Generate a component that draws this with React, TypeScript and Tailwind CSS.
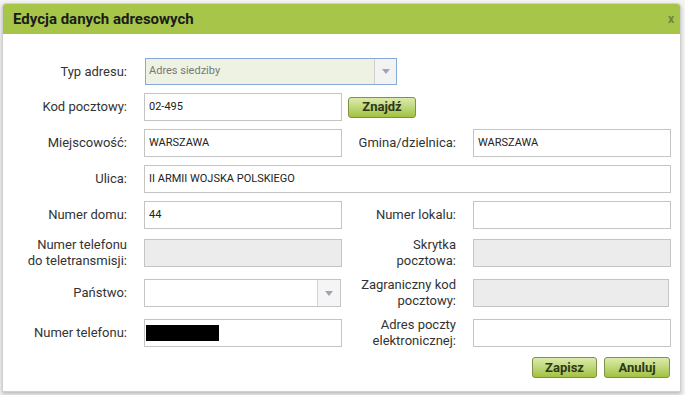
import React from 'react';

const FONT = { fontFamily: 'Roboto, "Liberation Sans", sans-serif' };

function Label({ children }: { children: React.ReactNode }) {
  return (
    <div className="pr-[17px] text-right text-[13px] leading-[16px] text-[#333]">{children}</div>
  );
}

function Input({
  value,
  disabled,
  className = '',
  children,
}: {
  value?: string;
  disabled?: boolean;
  className?: string;
  children?: React.ReactNode;
}) {
  return (
    <div
      className={`flex h-[28px] items-center border border-[#c4c4c4] px-[4px] text-[11px] text-[#222] ${
        disabled ? 'bg-[#ececec]' : 'bg-white'
      } ${className}`}
    >
      {value}
      {children}
    </div>
  );
}

function Arrow() {
  return (
    <svg width="8" height="5" viewBox="0 0 8 5">
      <path d="M0 0h8L4 5z" fill="#9aa6b4" />
    </svg>
  );
}

function GreenButton({ children, className = '' }: { children: React.ReactNode; className?: string }) {
  return (
    <button
      className={`flex h-[21px] items-center justify-center rounded-[3px] border border-[#7f9146] bg-linear-to-b from-[#dcebab] to-[#a2c23d] text-[13px] font-bold text-[#2e3819] ${className}`}
    >
      {children}
    </button>
  );
}

export default function App() {
  return (
    <div className="h-[395px] w-[685px] overflow-hidden bg-[#f4f4f4]" style={FONT}>
      <div className="ml-[2px] mt-[3px] w-[679px] overflow-hidden rounded-t-[4px] border border-[#cfcfcf] bg-white shadow-[0_2px_4px_rgba(0,0,0,0.25)]">
        <div className="flex h-[30px] items-center justify-between bg-[#a7c649] pl-[10px] pr-[6px]">
          <span className="text-[15px] font-bold text-[#1b1b1b]">Edycja danych adresowych</span>
          <span className="text-[12px] font-bold text-[#6e8443]">x</span>
        </div>

        <div className="grid grid-cols-[141px_198px_131px_198px] items-center gap-y-[8px] pb-[13px] pt-[24px]">
          <Label>Typ adresu:</Label>
          <div className="col-span-3">
            <div className="ml-[1px] flex h-[27px] w-[252px] border border-[#85aad8] bg-[#eef2e3]">
              <div className="flex flex-1 items-center px-[3px] text-[11px] text-[#777]">Adres siedziby</div>
              <div className="flex w-[22px] items-center justify-center border-l border-[#d0d0d0] bg-[#f3f3f3]">
                <Arrow />
              </div>
            </div>
          </div>

          <Label>Kod pocztowy:</Label>
          <Input value="02-495" />
          <div className="col-span-2">
            <GreenButton className="ml-[6px] w-[68px]">Znajdź</GreenButton>
          </div>

          <Label>Miejscowość:</Label>
          <Input value="WARSZAWA" />
          <Label>Gmina/dzielnica:</Label>
          <Input value="WARSZAWA" />

          <Label>Ulica:</Label>
          <Input value="II ARMII WOJSKA POLSKIEGO" className="col-span-3" />

          <Label>Numer domu:</Label>
          <Input value="44" />
          <Label>Numer lokalu:</Label>
          <Input />

          <Label>
            Numer telefonu
            <br />
            do teletransmisji:
          </Label>
          <Input disabled />
          <Label>
            Skrytka
            <br />
            pocztowa:
          </Label>
          <Input disabled />

          <Label>Państwo:</Label>
          <div className="flex h-[28px] w-[197px] border border-[#c4c4c4] bg-white">
            <div className="flex-1" />
            <div className="flex w-[23px] items-center justify-center border-l border-[#d6d6d6] bg-[#f5f5f5]">
              <Arrow />
            </div>
          </div>
          <Label>
            Zagraniczny kod
            <br />
            pocztowy:
          </Label>
          <Input disabled className="w-[196px]" />

          <Label>Numer telefonu:</Label>
          <Input className="!px-[1px]">
            <div className="h-[16px] w-[73px] bg-black" />
          </Input>
          <Label>
            Adres poczty
            <br />
            elektronicznej:
          </Label>
          <Input />

          <div className="col-span-4 flex justify-end gap-[7px] pr-[1px]">
            <GreenButton className="w-[65px]">Zapisz</GreenButton>
            <GreenButton className="w-[66px]">Anuluj</GreenButton>
          </div>
        </div>
      </div>
    </div>
  );
}
